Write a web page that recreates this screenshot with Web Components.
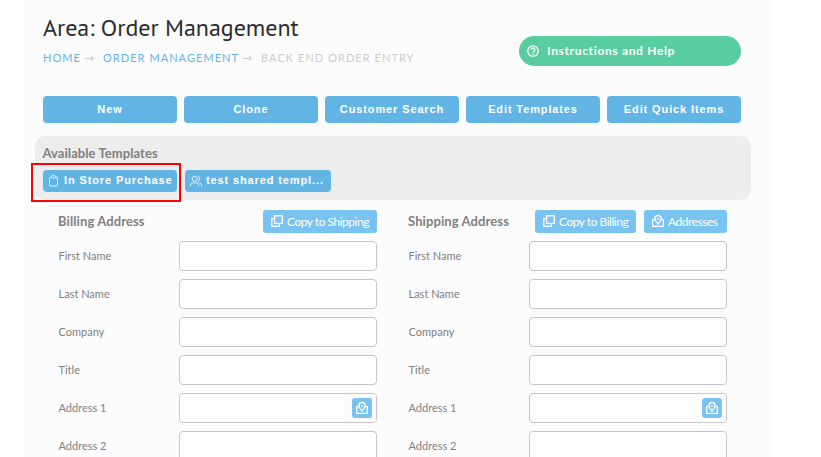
<!DOCTYPE html>
<html lang="en">
<head>
<meta charset="utf-8">
<title>Order Management</title>
<style>
  body {
    margin: 0;
    height: 457px;
    overflow: hidden;
    background: #fff;
    font-family: Lato, sans-serif;
    color: #808080;
  }
</style>
</head>
<body>
<order-page></order-page>

<script>
// Icon set, all on a 12px grid
const ICONS = {
  help: '<circle cx="6" cy="6" r="5.2" stroke-width="1.3"/><path stroke-width="1.3" d="M4.2 4.9a1.8 1.8 0 1 1 2.7 1.5Q6 6.9 6 7.6M6 8.3v1"/>',
  clipboard: '<path d="M3.5 1.9Q1.5 1.9 1.500 3.500v6.200q0 1.300 1.300 1.300h5.400q1.300 0 1.300-1.300V3.500Q9.500 1.900 7.500 1.900"/><rect x="3.500" y=".8" width="4" height="2.200" rx=".6"/>',
  users: '<circle cx="4.7" cy="3.8" r="2.5"/><path d="M.6 11.2V10q0-2.1 2.1-2.1h4q2.1 0 2.1 2.1v1.2M8 1.4a2.5 2.5 0 0 1 0 4.8M9.6 8q1.9.4 1.9 2.1v1.1"/>',
  copy: '<path stroke-width="1.4" d="M3.6.7h7.700v7.700H3.600z"/><path stroke-width="1.400" d="M3.600 3.700H.7v7.600h7.700V8.400"/>',
  mailpin: '<path stroke-width="1.300" d="M2.600 4.600H.7v6.700h10.600V4.600H9.400"/><path stroke-width="1.300" d="M6 9Q2.900 6 2.900 3.600a3.100 3.100 0 0 1 6.200 0Q9.100 6 6 9z"/><circle cx="6" cy="3.900" r=".9" fill="currentColor" stroke="none"/>',
};

function define(name, html) {
  customElements.define(name, class extends HTMLElement {
    constructor() {
      super();
      this.attachShadow({ mode: 'open' }).innerHTML = html;
    }
  });
}

class UiIcon extends HTMLElement {
  connectedCallback() {
    if (!this.shadowRoot) this.attachShadow({ mode: 'open' });
    this.shadowRoot.innerHTML = `
      <style>
        :host { display: block; flex: none; width: 12px; height: 12px; }
        svg { display: block; width: 100%; height: 100%; overflow: visible; }
      </style>
      <svg viewBox="0 0 12 12" fill="none" stroke="currentColor" stroke-width="1">
        ${ICONS[this.getAttribute('name')] || ''}
      </svg>
    `;
  }
}
customElements.define('ui-icon', UiIcon);

define('page-title', `
  <style>
    :host {
      display: block;
      height: 32px;
      font: 24px/32px "PT Sans", "Noto Sans", sans-serif;
      letter-spacing: -0.02px;
      color: #2b2b2b;
      white-space: nowrap;
    }
  </style>
  <slot></slot>
`);

define('bread-crumb', `
  <style>
    :host {
      display: flex;
      margin-top: 6px;
      height: 16px;
      font-size: 11px;
      line-height: 16px;
      letter-spacing: 1.05px;
      color: #ccc;
      white-space: nowrap;
    }
    ::slotted(a) { color: #62b4e5; }
    ::slotted(i) {
      width: 22px;
      font: 12px/16px "DejaVu Sans", sans-serif;
      letter-spacing: 0;
      text-indent: 3px;
    }
  </style>
  <slot></slot>
`);

define('help-link', `
  <style>
    :host {
      display: flex;
      align-items: center;
      box-sizing: border-box;
      width: 222px;
      height: 30px;
      padding-left: 8px;
      gap: 8px;
      border-radius: 15px;
      background: #5acda0;
      color: #fff;
      font-weight: 700;
      font-size: 12px;
      letter-spacing: 0.66px;
    }
    span { margin-top: -1px; }
  </style>
  <ui-icon name="help"></ui-icon><span><slot></slot></span>
`);

define('action-button', `
  <style>
    :host {
      display: block;
      height: 27px;
      border-radius: 4px;
      background: #62b4e5;
      color: #fff;
      font: bold 11px/27px "Liberation Sans", Arial, sans-serif;
      letter-spacing: 0.88px;
      text-align: center;
      white-space: nowrap;
    }
  </style>
  <slot></slot>
`);

class TemplateButton extends HTMLElement {
  connectedCallback() {
    this.attachShadow({ mode: 'open' }).innerHTML = `
      <style>
        :host {
          display: flex;
          align-items: center;
          box-sizing: border-box;
          height: 22px;
          padding: 0 5px;
          gap: 4px;
          border-radius: 4px;
          background: #62b4e5;
          color: #fff;
          font: bold 11px/22px "Liberation Sans", Arial, sans-serif;
          letter-spacing: 0.88px;
          white-space: nowrap;
        }
        ui-icon { opacity: .85; }
        span { margin-top: -2px; }
      </style>
      <ui-icon name="${this.getAttribute('icon')}"></ui-icon><span><slot></slot></span>
    `;
  }
}
customElements.define('template-button', TemplateButton);

class SmallButton extends HTMLElement {
  connectedCallback() {
    this.attachShadow({ mode: 'open' }).innerHTML = `
      <style>
        :host {
          display: flex;
          align-items: center;
          box-sizing: border-box;
          height: 23px;
          padding: 0 8px;
          gap: 4px;
          border-radius: 3px;
          background: #78c3f0;
          color: #fff;
          font-size: 12px;
          line-height: 23px;
          letter-spacing: -0.48px;
          white-space: nowrap;
        }
        ui-icon { margin-top: -1px; }
      </style>
      <ui-icon name="${this.getAttribute('icon')}"></ui-icon><span><slot></slot></span>
    `;
  }
}
customElements.define('small-button', SmallButton);

define('template-bar', `
  <style>
    :host {
      display: block;
      box-sizing: border-box;
      height: 64px;
      margin: 13px 22px 0 12px;
      padding: 8px 8px 0;
      border-radius: 10px;
      background: #ededed;
    }
    h3 {
      margin: 0;
      height: 26px;
      font: 700 13px/18px Lato, sans-serif;
      letter-spacing: 0.07px;
      text-indent: -0.5px;
    }
    .row { display: flex; gap: 8px; position: relative; }
    .marker {
      position: absolute;
      left: -12px;
      top: -7px;
      box-sizing: border-box;
      width: 150px;
      height: 39px;
      border: 2px solid #f00;
    }
  </style>
  <h3><slot name="heading"></slot></h3>
  <div class="row"><slot></slot><div class="marker"></div></div>
`);

class FormField extends HTMLElement {
  connectedCallback() {
    this.attachShadow({ mode: 'open' }).innerHTML = `
      <style>
        :host {
          display: grid;
          grid-template-columns: 121px 198px;
          height: 30px;
          font-size: 11px;
          line-height: 30px;
        }
        label { padding-left: 0.5px; }
        .box {
          display: flex;
          justify-content: flex-end;
          box-sizing: border-box;
          border: 1px solid #c6c6c6;
          border-radius: 4px;
          background: #fff;
          overflow: hidden;
        }
        .pick {
          display: flex;
          align-items: center;
          justify-content: flex-end;
          width: 32px;
          padding-right: 4px;
          box-sizing: border-box;
          background: #fcfcfc;
        }
        .pick b {
          display: grid;
          place-items: center;
          width: 20px;
          height: 20px;
          border-radius: 3px;
          background: #78c3f0;
          color: #fff;
        }
      </style>
      <label>${this.getAttribute('label')}</label>
      <div class="box">${this.hasAttribute('lookup')
        ? '<div class="pick"><b><ui-icon name="mailpin"></ui-icon></b></div>' : ''}</div>
    `;
  }
}
customElements.define('form-field', FormField);

class AddressForm extends HTMLElement {
  connectedCallback() {
    const fields = ['First Name', 'Last Name', 'Company', 'Title', 'Address 1', 'Address 2'];
    this.attachShadow({ mode: 'open' }).innerHTML = `
      <style>
        :host { display: block; width: 319px; }
        header {
          display: flex;
          gap: 8px;
          height: 23px;
          margin-bottom: 8px;
        }
        h3 {
          margin: 0 auto 0 0;
          font: 700 13px/22px Lato, sans-serif;
          letter-spacing: 0.1px;
        }
        .fields { display: grid; gap: 8px; }
      </style>
      <header><h3>${this.getAttribute('heading')}</h3><slot></slot></header>
      <div class="fields">
        ${fields.map((f) => `<form-field label="${f}"${f === 'Address 1' ? ' lookup' : ''}></form-field>`).join('')}
      </div>
    `;
  }
}
customElements.define('address-form', AddressForm);

define('order-page', `
  <style>
    :host {
      display: block;
      box-sizing: border-box;
      width: 750px;
      height: 457px;
      margin-left: 23px;
      padding-top: 12px;
      background: #fcfcfc;
      overflow: hidden;
    }
    .top {
      display: flex;
      justify-content: space-between;
      height: 84px;
      padding: 0 32px 0 20px;
    }
    help-link { margin-top: 24px; }
    .actions {
      display: grid;
      grid-template-columns: repeat(5, 134px);
      gap: 7px;
      padding-left: 20px;
    }
    .forms { display: flex; gap: 31px; padding: 10px 0 0 35px; }
  </style>
  <div class="top">
    <div>
      <page-title>Area: Order Management</page-title>
      <bread-crumb><a>HOME</a><i>→</i><a>ORDER MANAGEMENT</a><i>→</i><span>BACK END ORDER ENTRY</span></bread-crumb>
    </div>
    <help-link>Instructions and Help</help-link>
  </div>
  <div class="actions">
    <action-button>New</action-button>
    <action-button>Clone</action-button>
    <action-button>Customer Search</action-button>
    <action-button>Edit Templates</action-button>
    <action-button>Edit Quick Items</action-button>
  </div>
  <template-bar>
    <span slot="heading">Available Templates</span>
    <template-button icon="clipboard" style="width: 134px">In Store Purchase</template-button>
    <template-button icon="users" style="width: 146px">test shared templ...</template-button>
  </template-bar>
  <div class="forms">
    <address-form heading="Billing Address">
      <small-button icon="copy" style="width: 114px">Copy to Shipping</small-button>
    </address-form>
    <address-form heading="Shipping Address">
      <small-button icon="copy" style="width: 101px">Copy to Billing</small-button>
      <small-button icon="mailpin" style="width: 83px">Addresses</small-button>
    </address-form>
  </div>
`);
</script>
</body>
</html>
